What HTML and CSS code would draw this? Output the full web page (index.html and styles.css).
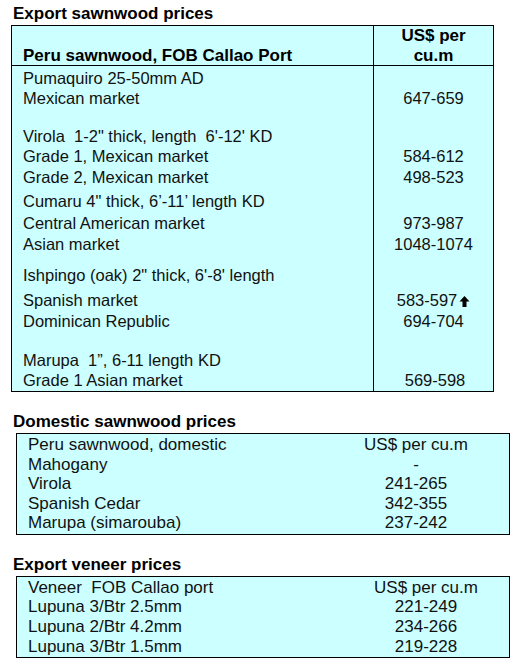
FILE: index.html
```html
<!DOCTYPE html>
<html>
<head>
<meta charset="utf-8">
<link rel="stylesheet" href="styles.css">
</head>
<body>
<section class="block first">
  <h2 class="title">Export sawnwood prices</h2>
  <table class="t1">
    <tr class="head">
      <th class="label">Peru sawnwood, FOB Callao Port</th>
      <th class="price">US$ per<br>cu.m</th>
    </tr>
    <tr class="p2"><td class="label">Pumaquiro 25-50mm AD</td><td class="price"></td></tr>
    <tr><td class="label">Mexican market</td><td class="price">647-659</td></tr>
    <tr class="p18"><td class="label">Virola&nbsp; 1-2" thick, length&nbsp; 6'-12' KD</td><td class="price"></td></tr>
    <tr><td class="label">Grade 1, Mexican market</td><td class="price">584-612</td></tr>
    <tr class="p1"><td class="label">Grade 2, Mexican market</td><td class="price">498-523</td></tr>
    <tr class="p4"><td class="label">Cumaru 4" thick, 6’-11’ length KD</td><td class="price"></td></tr>
    <tr class="p2"><td class="label">Central American market</td><td class="price">973-987</td></tr>
    <tr class="p1"><td class="label">Asian market</td><td class="price">1048-1074</td></tr>
    <tr class="p11"><td class="label">Ishpingo (oak) 2" thick, 6'-8' length</td><td class="price"></td></tr>
    <tr class="p5"><td class="label">Spanish market</td><td class="price">583-597<svg class="arrow" width="11" height="11" viewBox="0 0 11 11"><path d="M5.5 0 L10.5 5.5 H7.5 V11 H3.5 V5.5 H0.5 Z" fill="#000"/></svg></td></tr>
    <tr class="p1"><td class="label">Dominican Republic</td><td class="price">694-704</td></tr>
    <tr class="p19"><td class="label">Marupa&nbsp; 1”, 6-11 length KD</td><td class="price"></td></tr>
    <tr class="last"><td class="label">Grade 1 Asian market</td><td class="price shift">569-598</td></tr>
  </table>
</section>

<section class="block second">
  <h2 class="title">Domestic sawnwood prices</h2>
  <table class="t2">
    <tr class="top"><td class="label">Peru sawnwood, domestic</td><td class="price">US$ per cu.m</td></tr>
    <tr><td class="label">Mahogany</td><td class="price">-</td></tr>
    <tr><td class="label">Virola</td><td class="price">241-265</td></tr>
    <tr><td class="label">Spanish Cedar</td><td class="price">342-355</td></tr>
    <tr class="bottom"><td class="label">Marupa (simarouba)</td><td class="price">237-242</td></tr>
  </table>
</section>

<section class="block third">
  <h2 class="title">Export veneer prices</h2>
  <table class="t3">
    <tr class="top"><td class="label">Veneer&nbsp; FOB Callao port</td><td class="price">US$ per cu.m</td></tr>
    <tr><td class="label">Lupuna 3/Btr 2.5mm</td><td class="price">221-249</td></tr>
    <tr><td class="label">Lupuna 2/Btr 4.2mm</td><td class="price">234-266</td></tr>
    <tr><td class="label">Lupuna 3/Btr 1.5mm</td><td class="price">219-228</td></tr>
  </table>
</section>
</body>
</html>
```

FILE: styles.css
```css
html, body {
  margin: 0;
  padding: 0;
  background: #ffffff;
}

body {
  font-family: "Liberation Sans", Arial, sans-serif;
  color: #111111;
  padding-top: 4px;
}

.block {
  display: flex;
  flex-direction: column;
}

.second {
  margin-top: 20px;
}

.third {
  margin-top: 20px;
}

.title {
  margin: 0 0 1px 13px;
  font-size: 17px;
  line-height: 20px;
  font-weight: bold;
  color: #000000;
}

table {
  border-collapse: separate;
  border-spacing: 0;
  border: 1px solid #000000;
  background: #ccffff;
}

td, th {
  padding: 0;
  vertical-align: top;
}

/* Table 1 */
.t1 {
  margin-left: 11px;
  width: 483px;
  font-size: 16.5px;
  line-height: 20px;
}

.t1 .label {
  box-sizing: border-box;
  width: 362px;
  border-right: 1px solid #000000;
  padding-left: 11px;
  text-align: left;
  white-space: nowrap;
}

.t1 .price {
  text-align: center;
  white-space: nowrap;
}

.t1 .head th {
  font-size: 17px;
  font-weight: bold;
  line-height: 19.5px;
  border-bottom: 1px solid #000000;
  color: #000000;
}

.t1 .head th.label {
  vertical-align: bottom;
}

.t1 .p1 td { padding-top: 1px; }
.t1 .p2 td { padding-top: 2px; }
.t1 .p4 td { padding-top: 4px; }
.t1 .p5 td { padding-top: 5px; }
.t1 .p11 td { padding-top: 11px; }
.t1 .p18 td { padding-top: 18px; }
.t1 .p19 td { padding-top: 19px; }
.t1 .last td { padding-bottom: 1px; }

.t1 .price.shift {
  padding-left: 3px;
}

.arrow {
  margin-left: 2px;
  vertical-align: -1px;
}

/* Tables 2 and 3 */
.t2, .t3 {
  margin-left: 16px;
  width: 494px;
  font-size: 17px;
}

.t2 {
  line-height: 19.5px;
}

.t3 {
  line-height: 19.7px;
}

.t2 .label, .t3 .label {
  box-sizing: border-box;
  padding-left: 11px;
  text-align: left;
  white-space: nowrap;
}

.t2 .label {
  width: 306px;
}

.t3 .label {
  width: 326px;
}

.t2 .price, .t3 .price {
  text-align: center;
  white-space: nowrap;
}

.t2 .top td {
  padding-top: 1px;
}

.t2 .bottom td {
  padding-bottom: 1px;
}

.t3 .top td {
  padding-top: 1px;
}

.t3 tr:last-child td {
  padding-bottom: 1px;
}
```
